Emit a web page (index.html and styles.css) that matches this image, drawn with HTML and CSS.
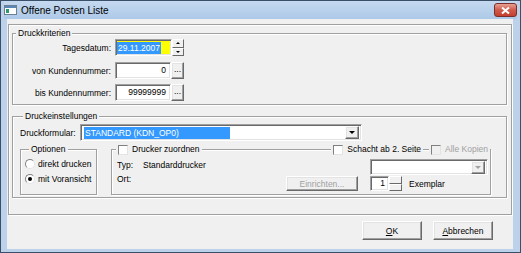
FILE: index.html
```html
<!DOCTYPE html>
<html lang="de">
<head>
  <meta charset="UTF-8" />
  <title>Offene Posten Liste</title>
  <link rel="stylesheet" href="styles.css">
</head>
<body>
  <div class="window">
    <div class="titlebar">
      <svg class="app-icon" width="13" height="10" viewBox="0 0 13 10">
        <rect x="0.5" y="0.5" width="12" height="9" fill="#fff" stroke="#6d7f93"/>
        <rect x="1" y="1" width="11" height="2" fill="#5a86b8"/>
        <rect x="2" y="4" width="3" height="4" fill="#2f9a6a"/>
      </svg>
      <span class="title">Offene Posten Liste</span>
      <div class="close-btn">
        <svg width="9" height="7" viewBox="0 0 9 7">
          <path d="M1 0.5 L8 6.5 M8 0.5 L1 6.5" stroke="#fff" stroke-width="2"/>
        </svg>
      </div>
    </div>

    <div class="client">
      <div class="frame">

        <div class="group crit">
          <div class="group-title">Druckkriterien</div>
          <div class="crit-row">
            <span class="crit-label">Tagesdatum:</span>
            <div class="edit date"><span class="selected">29.11.2007</span></div>
            <div class="spin tall">
              <div class="spin-btn"><span class="arr-up"></span></div>
              <div class="spin-btn"><span class="arr-down"></span></div>
            </div>
          </div>
          <div class="crit-row">
            <span class="crit-label">von Kundennummer:</span>
            <div class="edit number">0</div>
            <div class="btn dots">...</div>
          </div>
          <div class="crit-row last">
            <span class="crit-label">bis Kundennummer:</span>
            <div class="edit number">99999999</div>
            <div class="btn dots">...</div>
          </div>
        </div>

        <div class="group settings">
          <div class="group-title">Druckeinstellungen</div>
          <div class="form-row">
            <span class="form-label">Druckformular:</span>
            <div class="edit combo">
              <span class="selected wide">STANDARD (KDN_OP0)</span>
              <div class="btn drop"><span class="arr-down big"></span></div>
            </div>
          </div>

          <div class="sub-row">
            <div class="group options">
              <div class="group-title">Optionen</div>
              <div class="radio-row"><span class="radio"></span>direkt drucken</div>
              <div class="radio-row"><span class="radio checked"></span>mit Voransicht</div>
            </div>

            <div class="group printer">
              <div class="printer-head">
                <div class="head-item"><span class="check"></span>Drucker zuordnen</div>
                <div class="head-right">
                  <div class="head-item"><span class="check"></span>Schacht ab 2. Seite</div>
                  <div class="head-item disabled"><span class="check"></span>Alle Kopien</div>
                </div>
              </div>
              <div class="printer-body">
                <div class="info">
                  <div class="info-row"><span class="info-label">Typ:</span>Standarddrucker</div>
                  <div class="info-row"><span class="info-label">Ort:</span></div>
                </div>
                <div class="btn setup">Einrichten...</div>
                <div class="edit combo small">
                  <div class="btn drop off"><span class="arr-down big"></span></div>
                </div>
                <div class="copies">
                  <div class="edit count">1</div>
                  <div class="spin">
                    <div class="spin-btn"></div>
                    <div class="spin-btn"></div>
                  </div>
                  <span class="copies-label">Exemplar</span>
                </div>
              </div>
            </div>
          </div>
        </div>

      </div>

      <div class="actions">
        <div class="btn action"><u>O</u>K</div>
        <div class="btn action"><u>A</u>bbrechen</div>
      </div>
    </div>
  </div>
</body>
</html>
```

FILE: styles.css
```css
body {
  margin: 0;
  background: #1d4561;
  font-family: "Liberation Sans", Arial, sans-serif;
  font-size: 8.5px;
  color: #000;
}

.window {
  width: 521px;
  height: 253px;
  box-sizing: border-box;
  border: 1px solid #3a5068;
  background: #bcd2ea;
  padding: 0 7px 3px 6px;
  display: flex;
  flex-direction: column;
}

/* title bar */
.titlebar {
  height: 18px;
  margin: 0 -4px 0 -3px;
  display: flex;
  align-items: center;
  background: linear-gradient(#c5d9ef, #adc9e8);
}
.app-icon {
  margin-right: 4px;
}
.title {
  flex: 1;
  font-size: 10px;
  color: #000;
}
.close-btn {
  width: 21px;
  height: 12px;
  border: 1px solid #7b2f2a;
  border-radius: 3px;
  background: linear-gradient(#e8a193, #d05a4a 50%, #c4402f);
  display: flex;
  align-items: center;
  justify-content: center;
}

/* client area */
.client {
  flex: 1;
  background: #f0f0f0;
  padding: 5px 1px 0;
  display: flex;
  flex-direction: column;
}
.frame {
  border: 1px solid #a0a0a0;
  box-shadow: inset 1px 1px #fff, 1px 1px #fff;
  padding: 8px 4px 16px 3px;
}

.group {
  border: 1px solid #a0a0a0;
  box-shadow: inset 1px 1px #fff, 1px 1px #fff;
  display: flex;
  flex-direction: column;
}
.group-title {
  align-self: flex-start;
  height: 11px;
  line-height: 11px;
  margin: -6px 0 0 3px;
  padding: 0 2px;
  background: #f0f0f0;
}

/* 3d borders */
.edit {
  box-sizing: border-box;
  background: #fff;
  border: 1px solid;
  border-color: #a0a0a0 #fff #fff #a0a0a0;
  box-shadow: inset 1px 1px #696969, inset -1px -1px #e3e3e3;
}
.btn {
  box-sizing: border-box;
  background: #f0f0f0;
  border: 1px solid;
  border-color: #fff #696969 #696969 #fff;
  box-shadow: inset -1px -1px #a0a0a0, inset 1px 1px #e3e3e3;
  display: flex;
  align-items: center;
  justify-content: center;
}
.selected {
  background: #3399ff;
  color: #fff;
  line-height: 12px;
  padding: 0 1px;
}
.selected.wide {
  width: 146px;
  box-sizing: border-box;
}

/* Druckkriterien */
.crit {
  padding-bottom: 3px;
}
.crit-row {
  display: flex;
  align-items: center;
  height: 17px;
  margin-top: 6px;
}
.crit-row:nth-child(2) {
  margin-top: 0;
}
.crit-row.last {
  margin-top: 5px;
}
.crit-label {
  width: 98px;
  margin-right: 4px;
  text-align: right;
}
.edit.date {
  width: 57px;
  height: 17px;
  background: #ffff00;
  padding: 2px 0 0 1px;
  display: flex;
  align-items: flex-start;
}
.edit.date .selected {
  width: 44px;
  box-sizing: border-box;
}
.edit.number {
  width: 56px;
  height: 17px;
  padding-right: 4px;
  text-align: right;
  line-height: 15px;
}
.btn.dots {
  width: 13px;
  height: 17px;
  padding-bottom: 3px;
}

.spin {
  width: 12px;
  display: flex;
  flex-direction: column;
}
.spin.tall {
  height: 17px;
}
.spin-btn {
  flex: 1;
  box-sizing: border-box;
  background: #f0f0f0;
  border: 1px solid;
  border-color: #fff #696969 #696969 #fff;
  display: flex;
  align-items: center;
  justify-content: center;
}
.arr-up, .arr-down {
  width: 0;
  height: 0;
  border-left: 2px solid transparent;
  border-right: 2px solid transparent;
}
.arr-up {
  border-bottom: 2px solid #000;
}
.arr-down {
  border-top: 2px solid #000;
}
.arr-down.big {
  border-left-width: 3px;
  border-right-width: 3px;
  border-top-width: 3px;
}

/* Druckeinstellungen */
.settings {
  margin-top: 11px;
  padding: 0 0 2px 7px;
}
.form-row {
  display: flex;
  align-items: center;
  height: 17px;
  margin-top: 2px;
}
.form-label {
  width: 60px;
}
.edit.combo {
  width: 282px;
  height: 17px;
  padding: 2px 2px 2px 3px;
  display: flex;
  align-items: center;
  justify-content: space-between;
}
.btn.drop {
  width: 14px;
  height: 13px;
  margin-left: auto;
}
.btn.drop.off .arr-down {
  border-top-color: #a0a0a0;
}

.sub-row {
  display: flex;
  margin-top: 8px;
}
.options {
  width: 77px;
  height: 46px;
  box-sizing: border-box;
  padding-left: 4px;
}
.options .group-title {
  margin-left: 4px;
}
.radio-row {
  display: flex;
  align-items: center;
  height: 14px;
}
.radio-row:nth-child(2) {
  margin-top: 2px;
}
.radio-row + .radio-row {
  margin-top: 1px;
}
.radio {
  width: 10px;
  height: 10px;
  box-sizing: border-box;
  margin-right: 3px;
  border-radius: 50%;
  background: #fff;
  border: 1px solid;
  border-color: #808080 #e3e3e3 #e3e3e3 #808080;
  display: flex;
  align-items: center;
  justify-content: center;
}
.radio.checked::after {
  content: "";
  width: 4px;
  height: 4px;
  border-radius: 50%;
  background: #000;
}

.printer {
  width: 380px;
  height: 46px;
  box-sizing: border-box;
  margin-left: 14px;
  padding: 0 2px 3px 5px;
}
.printer-head {
  display: flex;
  justify-content: space-between;
  height: 11px;
  margin: -6px -2px 0 -1px;
}
.head-right {
  display: flex;
  gap: 6px;
}
.head-item {
  display: flex;
  align-items: center;
  padding: 0 2px;
  background: #f0f0f0;
  line-height: 11px;
}
.head-item.disabled {
  color: #a0a0a0;
}
.check {
  width: 10px;
  height: 10px;
  box-sizing: border-box;
  margin-right: 4px;
  background: #fff;
  border: 1px solid;
  border-color: #808080 #e3e3e3 #e3e3e3 #808080;
}
.head-item.disabled .check {
  background: #f0f0f0;
}

.printer-body {
  display: grid;
  grid-template-columns: 1fr 72px 118px;
  grid-template-rows: 16px 15px;
  column-gap: 12px;
  row-gap: 1px;
  margin-top: 4px;
}
.info {
  grid-row: 1 / 3;
  display: flex;
  flex-direction: column;
}
.info-row {
  display: flex;
  align-items: center;
  height: 12px;
}
.info-row + .info-row {
  margin-top: 2px;
}
.info-label {
  width: 26px;
}
.btn.setup {
  grid-row: 2;
  grid-column: 2;
  color: #a0a0a0;
}
.edit.combo.small {
  grid-row: 1;
  grid-column: 3;
  width: 118px;
  height: 16px;
}
.copies {
  grid-row: 2;
  grid-column: 3;
  display: flex;
  align-items: center;
}
.edit.count {
  width: 19px;
  height: 15px;
  text-align: right;
  padding-right: 3px;
  line-height: 13px;
}
.copies .spin {
  width: 13px;
  height: 15px;
}
.copies-label {
  margin-left: 7px;
}

/* dialog buttons */
.actions {
  display: flex;
  justify-content: flex-end;
  gap: 11px;
  margin: 6px 19px 0 0;
}
.btn.action {
  width: 60px;
  height: 19px;
}
```
